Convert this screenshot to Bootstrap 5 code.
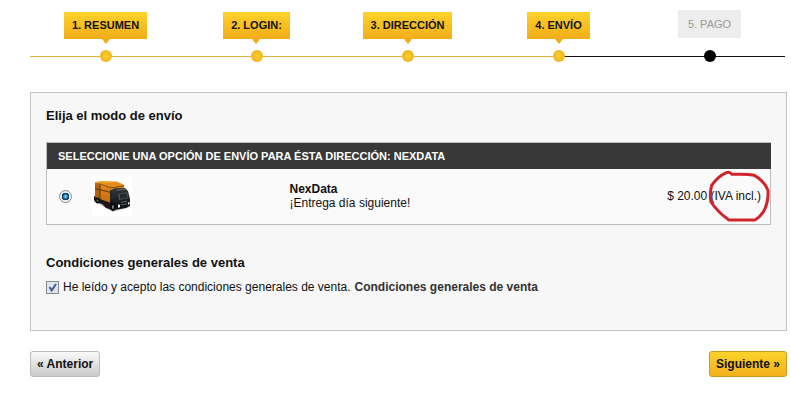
<!DOCTYPE html>
<html lang="es">
<head>
<meta charset="utf-8">
<meta name="viewport" content="width=device-width, initial-scale=1">
<title>Envío</title>
<link rel="stylesheet" href="https://cdn.jsdelivr.net/npm/bootstrap@5.3.0/dist/css/bootstrap.min.css">
<style>
body { font: 12px/14px "Liberation Sans", Arial, sans-serif; color: #111; background: #fff; }
.page { padding: 10px 4px 0 30px; }
.steps { margin-right: 2px; }
.step { height: 53px; }
.step-label { position: relative; margin-top: 2px; padding: 0 8px; font-size: 11px; line-height: 27px; font-weight: bold; color: #111; text-decoration: none; text-transform: uppercase; background: linear-gradient(#fcd32b, #f2ac18); }
.step-label::after { content: ""; position: absolute; left: 50%; top: 100%; margin-left: -4px; border: 4px solid transparent; border-top: 5px solid #f2ac18; border-bottom: 0; }
.step-label.pending { margin-top: 0; line-height: 28px; padding: 0 10px; font-weight: normal; color: #999; background: #ededed; }
.step-label.pending::after { display: none; }
.track { height: 13px; --before: #e3b03c; --after: #e3b03c; background: linear-gradient(90deg, var(--before) 50%, var(--after) 50%) center / 100% 1px no-repeat; }
.track-dot { width: 12px; height: 12px; border-radius: 50%; background: radial-gradient(#f9cf2c, #f1b021 80%); }
.current .track { --after: #111; }
.todo .track { --before: #111; --after: #111; }
.todo .track-dot { background: #000; }
.panel { margin-top: 29px; padding: 15px; border: 1px solid #c4c4c4; background: #f7f7f7; }
.panel h2 { font-size: 13px; line-height: 16px; font-weight: bold; margin: 0; }
.carriers { margin: 18px 0 30px; width: 100%; border: 1px solid #bdbdbd; background: #fafafa; }
.carriers th { padding: 0 11px; height: 26px; font-size: 11px; color: #fff; background: #383838; text-transform: uppercase; }
.carriers td { height: 56px; padding: 0; vertical-align: middle; }
.carriers thead { outline: 1px solid #383838; outline-offset: -1px; }
.col-radio { width: 45px; }
.col-logo { width: 198px; }
.carriers .price { padding-right: 9px; }
.round-input { appearance: none; display: block; width: 13px; height: 13px; margin: 0 0 0 12px; border: 1px solid #8a8f94; border-radius: 50%; background: #f4f4f4; }
.round-input:checked { background: radial-gradient(circle at 50% 50%, #8fe0f5 0, #2383b1 2px, #123f64 3px, #123f64 4px, #eee 4px); }
.tick-input { appearance: none; width: 13px; height: 13px; margin: 0; border: 1px solid #848b91; background: #e6e9ed; }
.tick-input:checked { background: #dfe3ea url("data:image/svg+xml,%3Csvg xmlns='http://www.w3.org/2000/svg' viewBox='0 0 11 11'%3E%3Cpath d='M2.5 5l2.2 3.5L9 2' fill='none' stroke='%23405a9c' stroke-width='2'/%3E%3C/svg%3E"); }
.terms { margin: 9px 0 21px; }
.terms a { color: #333; }
.pen { position: absolute; right: -9px; top: 50%; transform: translateY(-50%); pointer-events: none; }
.actions { margin-top: 20px; }
.nav-btn { height: 26px; padding: 0 6px; line-height: 24px; font-weight: bold; color: #111; border: 1px solid #bbb; border-radius: 3px; background: linear-gradient(#fafafa, #c9c9c9); }
.nav-btn.next { border-color: #c59a25; background: linear-gradient(#fcd32b, #f3b01b); }
</style>
<script src="https://cdn.jsdelivr.net/npm/bootstrap@5.3.0/dist/js/bootstrap.bundle.min.js"></script>
</head>
<body>
<main class="page">
  <ol class="steps list-unstyled d-flex mb-0">
    <li class="flex-fill w-100"><div class="step d-flex flex-column align-items-center"><a href="#" class="step-label">1. Resumen</a><div class="track w-100 mt-auto d-flex justify-content-center align-items-start"><span class="track-dot"></span></div></div></li>
    <li class="flex-fill w-100"><div class="step d-flex flex-column align-items-center"><a href="#" class="step-label">2. Login:</a><div class="track w-100 mt-auto d-flex justify-content-center align-items-start"><span class="track-dot"></span></div></div></li>
    <li class="flex-fill w-100"><div class="step d-flex flex-column align-items-center"><a href="#" class="step-label">3. Dirección</a><div class="track w-100 mt-auto d-flex justify-content-center align-items-start"><span class="track-dot"></span></div></div></li>
    <li class="flex-fill w-100 current"><div class="step d-flex flex-column align-items-center"><span class="step-label">4. Envío</span><div class="track w-100 mt-auto d-flex justify-content-center align-items-start"><span class="track-dot"></span></div></div></li>
    <li class="flex-fill w-100 todo"><div class="step d-flex flex-column align-items-center"><span class="step-label pending">5. Pago</span><div class="track w-100 mt-auto d-flex justify-content-center align-items-start"><span class="track-dot"></span></div></div></li>
  </ol>

  <form>
    <section class="panel">
      <h2>Elija el modo de envío</h2>
      <table class="carriers">
        <thead><tr><th colspan="4" scope="colgroup">Seleccione una opción de envío para ésta dirección: NexData</th></tr></thead>
        <tbody><tr>
          <td class="col-radio"><input class="round-input" type="radio" name="carrier" id="nexdata" aria-label="NexData" checked></td>
          <td class="col-logo">
            <svg class="d-block" width="40" height="40" viewBox="0 0 40 40" role="img" aria-label="Camión">
              <defs>
                <linearGradient id="boxSide" x2="0" y2="1"><stop stop-color="#e08a1c"/><stop offset="1" stop-color="#c66d0e"/></linearGradient>
                <linearGradient id="cab" x2="0" y2="1"><stop stop-color="#33373b"/><stop offset="1" stop-color="#0c0c0d"/></linearGradient>
              </defs>
              <path fill="#fff" d="M0 0h40v40H0z"/>
              <path fill="#c4c4c4" d="M5 27l16 9 14-4 3-4z"/>
              <path fill="#1b1817" d="M2 20l18 6v8l-6-2-4-4-7-2-1-2z"/>
              <path fill="#f0a02a" d="M3 6l7-1 15 .5 7 3.500-14 3L3 7.500z"/>
              <path fill="#b5640c" d="M3 7l5 .6V23l-5-2z"/>
              <path fill="url(#boxSide)" d="M8 7.500L19 11v16L8 23z"/>
              <path fill="#e08d1e" d="M9 7.500l16-1.500 7 3v4l-13 0z"/>
              <path fill="#5e3408" d="M7.500 7.500h1V23l-1-.5zM3 12l16 4v1L3 13zM9 8l10 3.500 13-2v.8l-13 2L9 8.600z"/>
              <path fill="url(#cab)" d="M18 14l6-2h9l3 3 2 8v7l-4 2-12 2-4-4z"/>
              <path fill="#4d565d" d="M26 18l9-2 1.500 6-9.500 2z"/>
              <path fill="#222b32" d="M27.500 18.500l7-1.500 1 4.500-7.500 1.500zM20 17l4 .5V23l-4-1z"/>
              <path fill="#6d757a" d="M24.500 13.500l9-.5v.8l-9 .7zM29 26l6-1v.7l-6 1zM29 28.500l6-1v.7l-6 1z"/>
              <path fill="#f0f0f0" d="M26 28.500l2 .3v2.500l-2 .5zM36 26.500l1.500-.4v2l-1.500.6z"/>
              <ellipse cx="5.500" cy="24.500" rx="2" ry="3" fill="#080808"/><ellipse cx="5.500" cy="24.500" rx=".8" ry="1.300" fill="#777"/>
              <ellipse cx="21" cy="31" rx="2.500" ry="4" fill="#080808"/><ellipse cx="21" cy="31" rx="1" ry="2" fill="#888"/>
            </svg>
          </td>
          <td><label for="nexdata"><strong>NexData</strong><br>¡Entrega día siguiente!</label></td>
          <td class="price text-end text-nowrap">$ 20.00 <span class="position-relative">(IVA incl.)<svg class="pen" width="62" height="52" viewBox="204 120 186 156" aria-hidden="true"><path d="M276 133Q269 124 259 128Q234 139 215 166Q208 190 213 216Q234 247 267 270H345Q358 263 371 244Q386 217 384 181Q373 153 343 136Q320 131 281 133" fill="none" stroke="#d1232b" stroke-width="9" stroke-linecap="round" stroke-linejoin="round"/></svg></span></td>
        </tr></tbody>
      </table>
      <h2>Condiciones generales de venta</h2>
      <div class="terms d-flex align-items-center">
        <input class="tick-input flex-shrink-0" type="checkbox" id="terms" checked>
        <label class="ms-1" for="terms">He leído y acepto las condiciones generales de venta.</label>
        <a href="#" class="ms-1 fw-bold text-decoration-none">Condiciones generales de venta</a>
      </div>
    </section>
    <div class="actions d-flex justify-content-between">
      <button type="button" class="nav-btn">« Anterior</button>
      <button type="submit" class="nav-btn next">Siguiente »</button>
    </div>
  </form>
</main>
</body>
</html>
